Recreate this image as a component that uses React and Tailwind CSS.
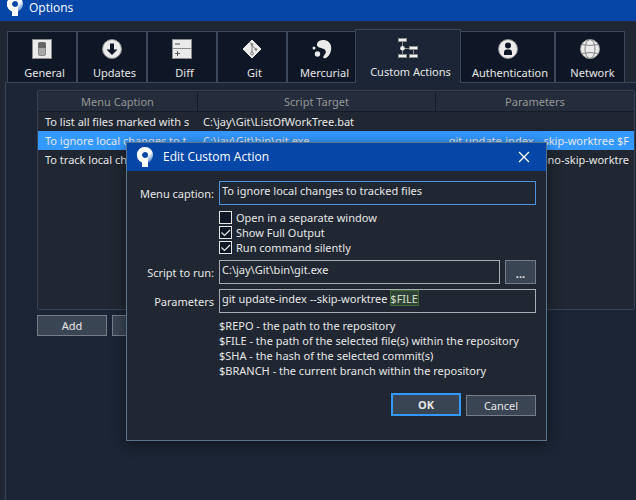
import React, { useState } from "react";

function AppLogo() {
  return (
    <svg width="18" height="20" viewBox="0 0 18 20" aria-hidden="true">
      <defs>
        <linearGradient id="logoFade" x1="0.45" y1="0.35" x2="0.95" y2="0.95">
          <stop offset="0" stopColor="#fff" />
          <stop offset="0.35" stopColor="#fff" />
          <stop offset="1" stopColor="#2f6cc0" />
        </linearGradient>
      </defs>
      <path
        fillRule="evenodd"
        fill="url(#logoFade)"
        d="M9 0a8 8 0 1 1 0 16a8 8 0 1 1 0-16zM9 5a3 3 0 1 0 0 6a3 3 0 1 0 0-6z"
      />
      <path
        fill="#fff"
        d="M9 0A8 8 0 0 0 1 8c0 3.500 2 6 5 7.300V20h6v-9.500L9 11a3 3 0 1 1 0-6z"
      />
    </svg>
  );
}

function GeneralIcon() {
  return (
    <svg width="20" height="20" viewBox="0 0 20 20" aria-hidden="true">
      <rect x="0.500" y="0.500" width="19" height="19" fill="#ebebeb" stroke="#8c8c8c" />
      <rect x="6.500" y="3.500" width="7" height="13" rx="1.500" fill="#a8a8a8" stroke="#8a8a8a" />
      <path d="M6 5a2 2 0 0 1 2-2h4a2 2 0 0 1 2 2v4H6z" fill="#666" />
    </svg>
  );
}

function UpdatesIcon() {
  return (
    <svg width="20" height="20" viewBox="0 0 20 20" aria-hidden="true">
      <circle cx="10" cy="10" r="9.500" fill="#ebebeb" stroke="#8c8c8c" strokeWidth="1" />
      <path d="M8 4.500h4v6h3.500L10 16 4.500 10.500H8z" fill="#0f1726" />
    </svg>
  );
}

function DiffIcon() {
  return (
    <svg width="20" height="20" viewBox="0 0 20 20" aria-hidden="true">
      <rect x="0.500" y="0.500" width="19" height="19" fill="#ebebeb" stroke="#8c8c8c" />
      <path d="M0 9.500h20" stroke="#8c8c8c" />
      <path d="M3 5h5" stroke="#9a9a9a" strokeWidth="2" />
      <path d="M3 14.500h5M5.500 12v5" stroke="#555" />
    </svg>
  );
}

function GitIcon() {
  return (
    <svg width="20" height="20" viewBox="0 0 20 20" aria-hidden="true">
      <path d="M10 1l9 9-9 9-9-9z" fill="#ebebeb" stroke="#ebebeb" strokeLinejoin="round" />
      <path d="M7 2.500l3 3V14M10 6.500l3.500 3.500" fill="none" stroke="#777" />
      <circle cx="10" cy="5.500" r="1.200" fill="#777" />
      <circle cx="10" cy="14.500" r="1.400" fill="#ebebeb" stroke="#777" />
      <circle cx="14" cy="10.500" r="1.200" fill="#777" />
    </svg>
  );
}

function MercurialIcon() {
  return (
    <svg width="20" height="20" viewBox="0 0 20 20" aria-hidden="true">
      <path
        d="M5 5C5.500 2 9 .5 12.500 1c4.500.7 7 4.300 6.700 8.500-.3 4.500-2.500 8.300-5.700 9.700-2 .6-2.800-1-1.800-2.300 1.100-1.500 2.500-2.800 2-4.700-.6-2.200-2.700-2.600-4.700-3.200C6.800 8.300 4.500 7.700 5 5z"
        fill="#ebebeb"
      />
      <circle cx="5.500" cy="15" r="2.700" fill="#ebebeb" />
      <circle cx="2" cy="9" r="1.500" fill="#ebebeb" />
    </svg>
  );
}

function ActionsIcon() {
  return (
    <svg width="20" height="20" viewBox="0 0 20 20" aria-hidden="true">
      <path d="M4.500 3v14M4.500 10.500H15.500V17" fill="none" stroke="#8c8c8c" />
      <g fill="#f2f2f2" stroke="#8c8c8c">
        <rect x="0.500" y="0.500" width="8" height="3" />
        <rect x="11.500" y="8.500" width="8" height="3" />
        <rect x="0.500" y="16.500" width="8" height="3" />
        <rect x="11.500" y="16.500" width="8" height="3" />
      </g>
      <circle cx="4.500" cy="10.300" r="2.300" fill="#f2f2f2" />
    </svg>
  );
}

function AuthenticationIcon() {
  return (
    <svg width="20" height="20" viewBox="0 0 20 20" aria-hidden="true">
      <circle cx="10" cy="10" r="9.500" fill="#ebebeb" stroke="#8c8c8c" strokeWidth="1" />
      <circle cx="10" cy="6.500" r="3" fill="#0f1726" />
      <path d="M6 16v-2.500c0-2 1-3 2.500-3h3c1.500 0 2.500 1 2.500 3V16z" fill="#0f1726" />
    </svg>
  );
}

function NetworkIcon() {
  return (
    <svg width="20" height="20" viewBox="0 0 20 20" aria-hidden="true">
      <circle cx="10" cy="10" r="9.500" fill="#ebebeb" stroke="#9a9a9a" strokeWidth="1" />
      <g fill="none" stroke="#858585">
        <ellipse cx="10" cy="10" rx="5" ry="9.500" />
        <path d="M2 5.500q8 2 16 0M2 14.500q8-2 16 0" />
      </g>
    </svg>
  );
}

const TABS = [
  { name: "General", Icon: GeneralIcon, size: "w-[70px]" },
  { name: "Updates", Icon: UpdatesIcon, size: "w-[70px]" },
  { name: "Diff", Icon: DiffIcon, size: "w-[70px]" },
  { name: "Git", Icon: GitIcon, size: "w-[70px]" },
  { name: "Mercurial", Icon: MercurialIcon, size: "w-[70px]" },
  { name: "Custom Actions", Icon: ActionsIcon, size: "w-[106px]", active: true },
  { name: "Authentication", Icon: AuthenticationIcon, size: "w-[95px] -ml-px" },
  { name: "Network", Icon: NetworkIcon, size: "w-[70px]" },
];

const ACTIONS = [
  { caption: "To list all files marked with s", target: "C:\\jay\\Git\\ListOfWorkTree.bat", params: "" },
  {
    caption: "To ignore local changes to t",
    target: "C:\\jay\\Git\\bin\\git.exe",
    params: "git update-index --skip-worktree $F",
    selected: true,
  },
  {
    caption: "To track local changes",
    target: "C:\\jay\\Git\\bin\\git.exe",
    params: "git update-index --no-skip-worktre",
  },
];

const HINTS = [
  "$REPO - the path to the repository",
  "$FILE - the path of the selected file(s) within the repository",
  "$SHA - the hash of the selected commit(s)",
  "$BRANCH - the current branch within the repository",
];

function Tab({ name, Icon, size, active }) {
  return (
    <button
      type="button"
      role="tab"
      aria-selected={Boolean(active)}
      className={`flex shrink-0 flex-col items-center border border-[#3d475a] leading-4 whitespace-nowrap ${size} ${
        active
          ? "relative z-10 -ml-[2px] h-[54px] border-b-0 bg-[#1b2535] pt-2"
          : "h-[52px] bg-[#0f1726] pt-[7px]"
      }`}
    >
      <Icon />
      <span className="mt-[6px] pl-[5px]">{name}</span>
    </button>
  );
}

function ActionTable() {
  return (
    <div className="mr-px h-[220px] overflow-hidden rounded-xs border border-[#3a4354] bg-[#202732] pt-px">
      <table className="w-full table-fixed border-separate border-spacing-0">
        <colgroup>
          <col className="w-[160px]" />
          <col className="w-[238px]" />
          <col />
        </colgroup>
        <thead>
          <tr className="h-5 bg-[#252d3c] text-[#959595]">
            <th className="border-r border-b border-[#161c27] p-0 font-normal">Menu Caption</th>
            <th className="border-r border-b border-[#161c27] p-0 font-normal">Script Target</th>
            <th className="border-b border-[#161c27] p-0 font-normal">Parameters</th>
          </tr>
        </thead>
        <tbody>
          {ACTIONS.map((a) => (
            <tr key={a.caption} className={`h-[19px] leading-4 ${a.selected ? "bg-[#3399ff]" : ""}`}>
              <td className="py-0 pr-0 pl-[7px] whitespace-nowrap">{a.caption}</td>
              <td className="py-0 pr-0 pl-[5px] whitespace-nowrap">{a.target}</td>
              <td className="py-0 pr-[5px] pl-0 text-right whitespace-nowrap">{a.params}</td>
            </tr>
          ))}
        </tbody>
      </table>
    </div>
  );
}

function Check({ label, initial }) {
  const [on, setOn] = useState(initial);
  return (
    <label className="flex h-[15px] items-center gap-1">
      <span className="grid h-[13px] w-[13px]">
        <input
          type="checkbox"
          checked={on}
          onChange={() => setOn(!on)}
          className="col-start-1 row-start-1 h-[13px] w-[13px] appearance-none border border-[#e6e6e6] bg-[#0f1726]"
        />
        {on && (
          <svg width="13" height="13" viewBox="0 0 13 13" className="pointer-events-none col-start-1 row-start-1" aria-hidden="true">
            <path d="M2.500 6.500l3 3L11 4" fill="none" stroke="#e6e6e6" strokeWidth="1.200" />
          </svg>
        )}
      </span>
      {label}
    </label>
  );
}

const FIELD = "h-6 w-full min-w-0 border bg-[#202732] px-[2px] pb-[5px] outline-none";
const BUTTON = "border border-[#767d89] bg-[#3a4554]";
const TITLE = "font-['Open_Sans',sans-serif] text-xs leading-4";

function EditDialog() {
  return (
    <section
      role="dialog"
      aria-label="Edit Custom Action"
      className="absolute top-[142px] left-[126px] z-20 w-[421px] border border-[#587590] bg-[#202732] pb-6 shadow-[0_3px_14px_rgba(0,0,0,0.45)]"
    >
      <header className="flex h-7 items-center bg-[#0546a7] pr-4 pl-[9px] text-white">
        <AppLogo />
        <h2 className={`ml-[9px] grow ${TITLE}`}>Edit Custom Action</h2>
        <button type="button" aria-label="Close">
          <svg width="12" height="12" viewBox="0 0 12 12" aria-hidden="true">
            <path d="M1 1l10 10M11 1L1 11" stroke="#fff" strokeWidth="1.300" />
          </svg>
        </button>
      </header>
      <form className="grid grid-cols-[87px_1fr] gap-x-[5px] pr-[10px] pt-[10px]" onSubmit={(e) => e.preventDefault()}>
        <label htmlFor="caption" className="pt-[5px] text-right">Menu caption:</label>
        <input id="caption" defaultValue="To ignore local changes to tracked files" className={`${FIELD} border-[#4d93dd]`} />

        <div className="col-start-2 pt-[5px] pb-[5px]">
          <Check label="Open in a separate window" initial={false} />
          <Check label="Show Full Output" initial={true} />
          <Check label="Run command silently" initial={true} />
        </div>

        <label htmlFor="script" className="pt-[5px] text-right">Script to run:</label>
        <div className="flex gap-[5px]">
          <input id="script" defaultValue="C:\jay\Git\bin\git.exe" className={`${FIELD} border-[#a9adb3]`} />
          <button type="button" aria-label="Browse" className={`${BUTTON} w-[31px] shrink-0 pt-1 font-bold`}>...</button>
        </div>

        <label htmlFor="params" className="pt-[10px] text-right">Parameters</label>
        <div className="relative mt-[5px]">
          <input
            id="params"
            defaultValue="git update-index --skip-worktree $FILE"
            className={`${FIELD} border-[#a9adb3]`}
          />
          <span className="pointer-events-none absolute top-[1px] left-[171px] h-4 w-[29px] border border-[#3f6a33] bg-[#6fae4a]/20" />
        </div>

        <ul className="col-start-2 pt-[5px] leading-[15px]">
          {HINTS.map((h) => (
            <li key={h} className="whitespace-nowrap">{h}</li>
          ))}
        </ul>

        <div className="col-start-2 flex items-end justify-end gap-[5px] pt-[15px]">
          <button type="submit" className="h-[23px] w-[70px] border-2 border-[#3399ff] bg-[#3a4554] font-bold">OK</button>
          <button type="button" className={`${BUTTON} h-[21px] w-[70px]`}>Cancel</button>
        </div>
      </form>
    </section>
  );
}

export default function App() {
  return (
    <div className="relative flex h-screen flex-col overflow-hidden bg-[#202732] font-['Noto_Sans',sans-serif] text-[11px] leading-4 text-[#e6e6e6]">
      <header className="flex h-[21px] shrink-0 items-start bg-[#0546a7] pl-[6px] text-white">
        <div className="-mt-1 shrink-0"><AppLogo /></div>
        <h1 className={`ml-[5px] ${TITLE}`}>Options</h1>
      </header>
      <div role="tablist" className="flex shrink-0 items-end pt-2 pl-[7px]">
        {TABS.map((t) => (
          <Tab key={t.name} {...t} />
        ))}
      </div>
      <main className="-mt-px ml-[5px] grow border-t border-l border-[#3d475a] bg-[#1b2535] pt-[7px] pl-[31px]">
        <ActionTable />
        <div className="flex gap-[5px] pt-[5px]">
          <button type="button" className={`${BUTTON} h-[21px] w-[70px]`}>Add</button>
          <button type="button" className={`${BUTTON} h-[21px] w-[70px]`} aria-label="Edit" />
        </div>
      </main>
      <EditDialog />
    </div>
  );
}
